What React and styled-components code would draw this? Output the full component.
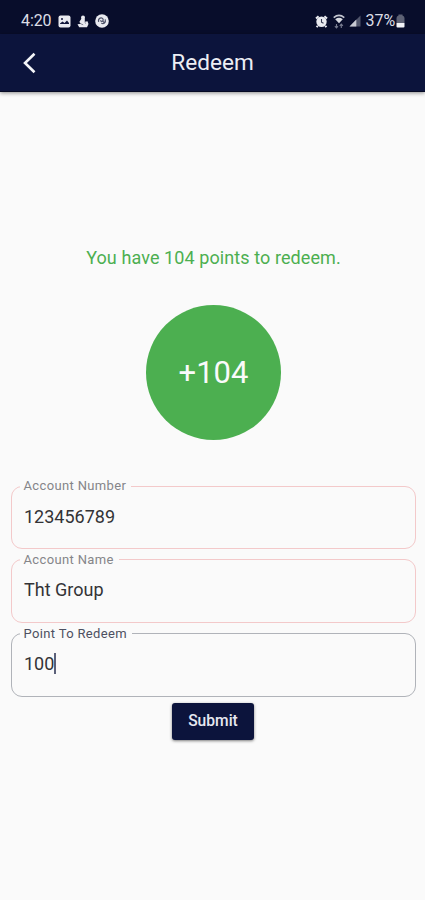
import React, { useState } from 'react'
import styled, { createGlobalStyle } from 'styled-components'

const GlobalStyle = createGlobalStyle`
  * {
    box-sizing: border-box;
  }

  body {
    margin: 0;
    background: #fafafa;
    font-family: Roboto, "Liberation Sans", sans-serif;
  }
`

const Screen = styled.div`
  display: flex;
  flex-direction: column;
  height: 900px;
  background: #fafafa;
`

const StatusBar = styled.div`
  display: flex;
  justify-content: space-between;
  height: 34px;
  padding: 8px 20px 0 21px;
  background: #080d2b;
  color: #dcdee6;
  font-size: 16px;
  line-height: 26px;
`

const StatusGroup = styled.div`
  display: flex;
  align-items: center;
  height: 26px;

  svg {
    display: block;
    flex: none;
  }
`

const Clock = styled.span`
  width: 37px;
  letter-spacing: -0.1px;
`

const Battery = styled.span`
  letter-spacing: -0.1px;
  margin: 0 1px 0 5px;
`

const AppBar = styled.header`
  display: grid;
  grid-template-columns: 60px 1fr 60px;
  align-items: center;
  height: 58px;
  flex: none;
  background: #0c143c;
  border-bottom: 1px solid #050a24;
  box-shadow: 0 1px 4px rgba(0, 0, 0, 0.45);
`

const BackButton = styled.button`
  display: flex;
  padding: 1px 0 0 22px;
  border: 0;
  background: none;
`

const Title = styled.h1`
  margin: 0;
  padding-top: 1px;
  color: #eceef4;
  font-size: 22.6px;
  font-weight: 400;
  line-height: 28px;
  text-align: center;
`

const Content = styled.main`
  display: flex;
  flex-direction: column;
  align-items: center;
  padding: 153px 9px 0 11px;
`

const Message = styled.p`
  margin: 0;
  color: #4caf50;
  font-size: 18px;
  line-height: 25px;
  letter-spacing: 0.09px;
`

const Points = styled.div`
  display: flex;
  align-items: center;
  justify-content: center;
  width: 135px;
  height: 135px;
  margin: 35px 0 38px;
  padding-bottom: 1px;
  border-radius: 50%;
  background: #4caf50;
  color: #fafafa;
  font-size: 31px;
`

const Form = styled.form`
  display: flex;
  flex-direction: column;
  align-items: center;
  width: 100%;
`

const Field = styled.fieldset`
  width: 100%;
  height: 71px;
  margin: 0 0 ${(props) => (props.$active ? 6 : 2.8)}px;
  padding: 0 11px 0 12px;
  border: 1px solid ${(props) => (props.$active ? '#b0b3b9' : '#f3c9ca')};
  border-radius: 11px;
`

const Label = styled.legend`
  margin-left: -4px;
  padding: 0 5px 0 3.5px;
  color: ${(props) => (props.$active ? '#4d5061' : '#858589')};
  font-size: 13px;
  line-height: 16px;
  letter-spacing: 0.35px;
`

const Value = styled.div`
  display: flex;
  align-items: center;
  height: 24px;
  margin-top: 10px;
  color: #333336;
  font-size: 18px;
`

const Caret = styled.span`
  width: 2px;
  height: 21px;
  background: #5b6079;
`

const Submit = styled.button`
  width: 82px;
  height: 37px;
  margin-right: 1px;
  border: 0;
  border-radius: 3px;
  background: #0c143c;
  box-shadow: 0 1px 3px rgba(0, 0, 0, 0.5);
  color: #e6e8f0;
  font-family: inherit;
  font-size: 15.6px;
  font-weight: 500;
`

const ImageIcon = () => (
  <svg width="13" height="13" viewBox="0 0 13 13">
    <rect x="0.5" y="0.5" width="12" height="12" rx="2" fill="#e9eaf0" />
    <path d="M2 8.5 L4.5 6.5 L6.5 8 L9 5.5 L11 8 V9 H2 Z" fill="#10153a" />
    <circle cx="4" cy="4" r="1" fill="#10153a" />
  </svg>
)

const FigureIcon = () => (
  <svg width="12" height="13" viewBox="0 0 12 13">
    <circle cx="6" cy="2.4" r="2" fill="#e9eaf0" />
    <path d="M4.5 3.5 H7.8 V6.8 L10.5 6.3 L11.5 9 L10 12.3 H2.2 L0.5 9.3 L4 8.8 L2.3 7 Z" fill="#e9eaf0" />
    <path d="M3.8 8.8 L6.2 9.8 M7.5 7.2 L9 8.5" stroke="#565a70" strokeWidth="0.7" />
  </svg>
)

const BadgeIcon = () => (
  <svg width="14" height="14" viewBox="0 0 14 14">
    <circle cx="7" cy="7" r="6.8" fill="#e9eaf0" />
    <path d="M3.6 7.8 C2.8 4 6.8 2.8 8 5 C9 7.2 5.7 8.3 5.6 6.3 M10.2 5.3 C11.2 8.8 8.5 10.6 6.3 9 M8 7.4 L9.2 8.3" fill="none" stroke="#4b5067" strokeWidth="1.2" />
  </svg>
)

const AlarmIcon = () => (
  <svg width="13" height="13" viewBox="0 0 13 13">
    <path d="M1 3.6 L3.6 1.2 M9.4 1.2 L12 3.6 M2.8 10.8 L1.6 12.2 M10.2 10.8 L11.4 12.2" stroke="#e9eaf0" strokeWidth="2" />
    <circle cx="6.5" cy="6.8" r="5.2" fill="#e9eaf0" />
    <path d="M6.5 4 V7.2 L8.5 8.2" fill="none" stroke="#343951" strokeWidth="1.1" />
  </svg>
)

const WifiIcon = () => (
  <svg width="12" height="15" viewBox="0 0 12 15">
    <path d="M0.7 3.6 Q6 -0.8 11.3 3.6" fill="none" stroke="#c4c7d1" strokeWidth="1.5" />
    <path d="M2.2 5.2 Q6 2.3 9.8 5.2 L6 9.2 Z" fill="#d7d9e0" />
    <path d="M3.5 14 V10 M1.9 12.2 L3.5 14 L5 12.2 M8.3 14 V10 M6.8 11.8 L8.3 10 L9.9 11.8" fill="none" stroke="#777b8f" strokeWidth="1.1" />
  </svg>
)

const SignalIcon = () => (
  <svg width="12" height="12" viewBox="0 0 12 12">
    <path d="M11.5 0.5 V11.5 H0.5 Z" fill="#50556b" />
    <path d="M7.3 4.5 V11.5 H0.5 Z" fill="#c8cad3" />
  </svg>
)

const BatteryIcon = () => (
  <svg width="9" height="14" viewBox="0 0 9 14">
    <path d="M2.5 1.5 V0.5 H6.5 V1.5 Q8.5 2 8.5 4 V9 H0.5 V4 Q0.5 2 2.5 1.5 Z" fill="#5d6174" />
    <path d="M0.5 9 H8.5 V12.5 Q8.5 13.5 7.5 13.5 H1.5 Q0.5 13.5 0.5 12.5 Z" fill="#f2f3f7" />
  </svg>
)

const BackIcon = () => (
  <svg width="15" height="22" viewBox="0 0 15 22">
    <path d="M12.5 1.7 L3 11 L12.5 20.3" fill="none" stroke="#f4f5f8" strokeWidth="2.6" />
  </svg>
)

const LeftIcons = styled.div`
  display: grid;
  grid-template-columns: 19px 18px 14px;
  align-items: center;
`

const RightIcons = styled.div`
  display: grid;
  grid-template-columns: 18px 16px 12px;
  align-items: center;
`

const fields = [
  { name: 'number', label: 'Account Number', value: '123456789' },
  { name: 'name', label: 'Account Name', value: 'Tht Group' },
  { name: 'points', label: 'Point To Redeem', value: '100' }
]

const App = () => {
  // active is the field that holds the caret, by default it is the points field.
  const [active, setActive] = useState('points')

  return (
    <Screen>
      <GlobalStyle />
      <StatusBar>
        <StatusGroup>
          <Clock>4:20</Clock>
          <LeftIcons>
            <ImageIcon />
            <FigureIcon />
            <BadgeIcon />
          </LeftIcons>
        </StatusGroup>
        <StatusGroup>
          <RightIcons>
            <AlarmIcon />
            <WifiIcon />
            <SignalIcon />
          </RightIcons>
          <Battery>37%</Battery>
          <BatteryIcon />
        </StatusGroup>
      </StatusBar>
      <AppBar>
        <BackButton aria-label="Back">
          <BackIcon />
        </BackButton>
        <Title>Redeem</Title>
      </AppBar>
      <Content>
        <Message>You have 104 points to redeem.</Message>
        <Points>+104</Points>
        <Form onSubmit={(e) => e.preventDefault()}>
          {fields.map((field) => (
            <Field key={field.name} $active={active === field.name} onClick={() => setActive(field.name)}>
              <Label $active={active === field.name}>{field.label}</Label>
              <Value>
                {field.value}
                {active === field.name && <Caret />}
              </Value>
            </Field>
          ))}
          <Submit type="submit">Submit</Submit>
        </Form>
      </Content>
    </Screen>
  )
}

export default App
